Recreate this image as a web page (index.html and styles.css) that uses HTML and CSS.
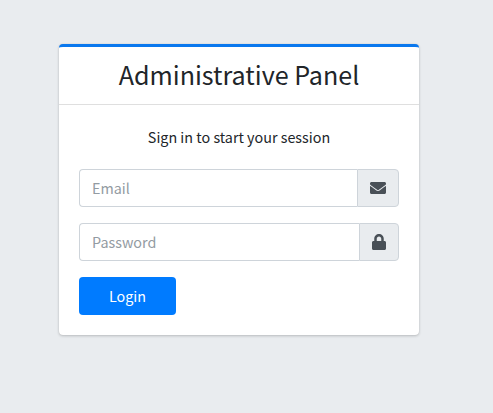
FILE: index.html
```html
<!DOCTYPE html>
<html lang="en">
<head>
<meta charset="utf-8">
<title>Administrative Panel</title>
<link rel="stylesheet" href="styles.css">
</head>
<body>
<main class="card">
  <header class="card-header"><h1 class="title">Administrative Panel</h1></header>
  <form class="card-body">
    <p class="message">Sign in to start your session</p>
    <div class="input-group">
      <input class="field email" type="email" placeholder="Email" aria-label="Email">
      <span class="addon"><svg class="envelope" viewBox="0 0 512 512"><path d="M502.3 190.8c3.9-3.1 9.7-.2 9.7 4.7V400c0 26.5-21.5 48-48 48H48c-26.5 0-48-21.5-48-48V195.6c0-5 5.7-7.8 9.7-4.7 22.4 17.4 52.1 39.5 154.1 113.6 21.1 15.4 56.7 47.8 92.2 47.6 35.7.3 72-32.8 92.3-47.6 102-74.1 131.6-96.3 154-113.7zM256 320c23.2.4 56.6-29.2 73.4-41.4 132.7-96.3 142.8-104.7 173.4-128.7 5.8-4.5 9.2-11.5 9.2-18.9v-19c0-26.5-21.5-48-48-48H48c-26.5 0-48 21.5-48 48v19c0 7.4 3.4 14.3 9.2 18.9 30.6 23.9 40.7 32.4 173.4 128.7 16.8 12.2 50.2 41.8 73.4 41.4z"/></svg></span>
    </div>
    <div class="input-group">
      <input class="field password" type="password" placeholder="Password" aria-label="Password">
      <span class="addon"><svg class="lock" viewBox="0 0 448 512"><path d="M400 224h-24v-72C376 68.2 307.8 0 224 0S72 68.2 72 152v72H48c-26.5 0-48 21.5-48 48v192c0 26.5 21.5 48 48 48h352c26.5 0 48-21.5 48-48V272c0-26.5-21.5-48-48-48zm-104 0H152v-72c0-39.7 32.3-72 72-72s72 32.3 72 72v72z"/></svg></span>
    </div>
    <button class="login" type="button">Login</button>
  </form>
</main>
</body>
</html>
```
FILE: styles.css
```css
* { box-sizing: border-box; }
body {
  margin: 0;
  padding: 44px 74px 0 59px;
  min-height: 413px;
  background: #e9ecef;
  color: #212529;
  font: 400 14.35px/24px "Noto Sans CJK JP", "Noto Sans", sans-serif;
}
.card {
  height: 291px;
  background: #fff;
  border-top: 3px solid #0a78ee;
  border-radius: 4px;
  box-shadow: 0 0 1px rgba(0,0,0,.125), 0 1px 3px rgba(0,0,0,.2);
}
.card-header {
  height: 58px;
  padding: 10px 20px;
  border-bottom: 1px solid #dfdfdf;
  text-align: center;
}
.title { margin: 0; font-size: 25.1px; font-weight: 400; line-height: 34px; white-space: nowrap; }
.card-body { margin: 0; padding: 20px; }
.message { margin: 0; padding-bottom: 20px; text-align: center; }
.input-group { display: flex; height: 38px; margin-bottom: 16px; }
.field {
  flex: 1;
  min-width: 0;
  padding: 6px 12px;
  border: 1px solid #ced4da;
  border-right: 0;
  border-radius: 4px 0 0 4px;
  background: #fff;
  font: inherit;
}
.field::placeholder { color: #939ba2; opacity: 1; }
.addon {
  display: flex;
  align-items: center;
  padding: 0 12px;
  border: 1px solid #ced4da;
  border-radius: 0 4px 4px 0;
  background: #e9ecef;
}
.envelope, .lock { height: 16px; fill: #495057; }
.envelope { width: 16px; }
.lock { width: 14px; }
.login {
  display: block;
  width: 97px;
  height: 38px;
  padding: 0;
  border: 0;
  border-radius: 4px;
  background: #007bff;
  color: #fff;
  font: inherit;
}
```
